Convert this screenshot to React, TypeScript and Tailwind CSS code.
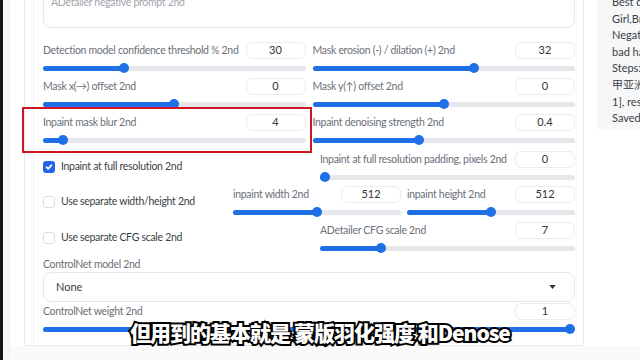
import clsx from 'clsx';

function Slider({ pct, className }: { pct: number; className?: string }) {
  const pos = `calc(5px + (100% - 10px) * ${pct / 100})`;
  return (
    <div className={clsx('relative flex h-[10px] items-center', className)}>
      <div className="h-[5px] w-full overflow-hidden rounded-full bg-[#e6e7ea]">
        <div className="h-full bg-[#1f6fe6]" style={{ width: pos }} />
      </div>
      <div
        className="absolute top-0 size-[10px] -translate-x-1/2 rounded-full bg-[#1f6fe6]"
        style={{ left: pos }}
      />
    </div>
  );
}

function NumBox({ value }: { value: string }) {
  return (
    <div className="flex h-[17px] w-[60px] shrink-0 items-center justify-center rounded-md border border-[#ececee] bg-white text-[11px] text-[#333]">
      {value}
    </div>
  );
}

interface BlockProps {
  label: string;
  value: string;
  pct: number;
  className?: string;
}

function SliderBlock({ label, value, pct, className }: BlockProps) {
  return (
    <div className={clsx('flex min-w-0 flex-col', className)}>
      <div className="flex h-[17px] items-center justify-between gap-[2px]">
        <span className="whitespace-nowrap text-[10.5px] leading-none tracking-[-0.3px] text-[#6b7079]">{label}</span>
        <NumBox value={value} />
      </div>
      <Slider pct={pct} className="mt-[4px]" />
    </div>
  );
}

function Check({ checked, label }: { checked?: boolean; label: string }) {
  return (
    <label className="flex items-center gap-[6px] text-[10.5px] tracking-[-0.3px] text-[#3b3f46]">
      {checked ? (
        <span className="flex size-[12px] items-center justify-center rounded-[3px] bg-[#2563eb]">
          <svg viewBox="0 0 12 12" className="size-[10px]" fill="none" stroke="white" strokeWidth="2" strokeLinecap="round" strokeLinejoin="round">
            <path d="M3 6.2l2 2 4-4.4" />
          </svg>
        </span>
      ) : (
        <span className="size-[12px] rounded-[3px] border border-[#dcdde0] bg-white" />
      )}
      <span className="whitespace-nowrap">{label}</span>
    </label>
  );
}

const infoLines = [
  'Best quality, masterpiece',
  'Girl,Brown hair, smile',
  'Negative prompt: lowres',
  'bad hands, text, error',
  'Steps: 20, Sampler: Euler a',
  '甲亚洲人像 LoRA 0.8',
  '1], resize: 512x768',
  'Saved: 00012-1234.png',
];

export default function App() {
  return (
    <div className="relative flex h-[360px] w-[640px] overflow-hidden bg-white [font-family:Lato,'Noto_Sans_CJK_SC',sans-serif]">
      {/* video edge */}
      <div className="w-[3px] shrink-0 bg-[#141414]" />
      <div className="w-[7px] shrink-0 border-r border-[#eceef0] bg-[#f7f7f8]" />

      <div className="flex min-w-0 flex-1 flex-col">
        <div className="flex">
          {/* settings panel */}
          <div className="w-[574px] shrink-0 pl-[14px]">
            <div className="border-b border-l border-r border-[#e7e8eb] pl-[8px]">
              <div className="flex flex-col border-l border-[#eef0f2] pb-[11px] pl-[9px] pr-[8px]">
                <div className="-mt-[10px] h-[38px] rounded-lg border border-[#e7e8eb] bg-white px-[7px] pt-[4px] text-[10.5px] leading-[14px] tracking-[-0.3px] text-[#a0a4ab]">
                  ADetailer negative prompt 2nd
                </div>

                <div className="mt-[14px] grid grid-cols-2 gap-x-[7px] gap-y-[5px]">
                  <SliderBlock label="Detection model confidence threshold % 2nd" value="30" pct={30} />
                  <SliderBlock label="Mask erosion (-) / dilation (+) 2nd" value="32" pct={62} />
                  <SliderBlock label="Mask x(→) offset 2nd" value="0" pct={50} />
                  <SliderBlock label="Mask y(↑) offset 2nd" value="0" pct={50} />
                  <SliderBlock label="Inpaint mask blur 2nd" value="4" pct={6} />
                  <SliderBlock label="Inpaint denoising strength 2nd" value="0.4" pct={40} />
                </div>

                <div className="mt-[6px] flex items-center">
                  <div className="w-[277px] shrink-0">
                    <Check checked label="Inpaint at full resolution 2nd" />
                  </div>
                  <SliderBlock className="flex-1" label="Inpaint at full resolution padding, pixels 2nd" value="0" pct={0} />
                </div>

                <div className="mt-[4px] flex items-center">
                  <div className="w-[190px] shrink-0">
                    <Check label="Use separate width/height 2nd" />
                  </div>
                  <div className="flex min-w-0 flex-1 gap-[6px]">
                    <SliderBlock className="flex-1" label="inpaint width 2nd" value="512" pct={50} />
                    <SliderBlock className="flex-1" label="inpaint height 2nd" value="512" pct={50} />
                  </div>
                </div>

                <div className="mt-[5px] flex items-center">
                  <div className="w-[277px] shrink-0">
                    <Check label="Use separate CFG scale 2nd" />
                  </div>
                  <SliderBlock className="flex-1" label="ADetailer CFG scale 2nd" value="7" pct={23} />
                </div>

                <div className="mt-[5px] text-[10.5px] leading-[12px] tracking-[-0.3px] text-[#6b7079]">ControlNet model 2nd</div>
                <div className="mt-[2px] flex h-[30px] items-center justify-between rounded-lg border border-[#e7e8eb] bg-white pl-[12px] pr-[18px] text-[11px] text-[#3b3f46]">
                  <span>None</span>
                  <svg viewBox="0 0 8 5" className="h-[4px] w-[7px]" fill="#333">
                    <path d="M0 0h8L4 5z" />
                  </svg>
                </div>

                <SliderBlock className="mt-[1px]" label="ControlNet weight 2nd" value="1" pct={100} />
              </div>
            </div>
          </div>

          {/* generation info */}
          <div className="min-w-0 flex-1 pl-[13px]">
            <div className="-mt-[6px] h-[136px] overflow-hidden rounded-l bg-[#f6f7f8] pl-[15px] text-[11px] leading-[16.6px] text-[#3b3f46]">
              {infoLines.map(line => (
                <div key={line} className="whitespace-nowrap">{line}</div>
              ))}
            </div>
          </div>
        </div>
        <div className="flex-1 bg-[#fafafa]" />
      </div>

      {/* highlight annotation */}
      <div className="absolute left-[22px] top-[107px] h-[46px] w-[290px] border-2 border-[#cf1424]" />

      {/* subtitle */}
      <div className="absolute left-0 top-[318px] w-[640px] whitespace-pre text-center text-[21px] font-black leading-[28px] tracking-[-1px] text-white [-webkit-text-stroke:4px_#000] [paint-order:stroke_fill] [font-family:'Noto_Sans_CJK_SC',sans-serif]">
        但用到的基本就是 蒙版羽化强度 和Denose
      </div>
    </div>
  );
}
